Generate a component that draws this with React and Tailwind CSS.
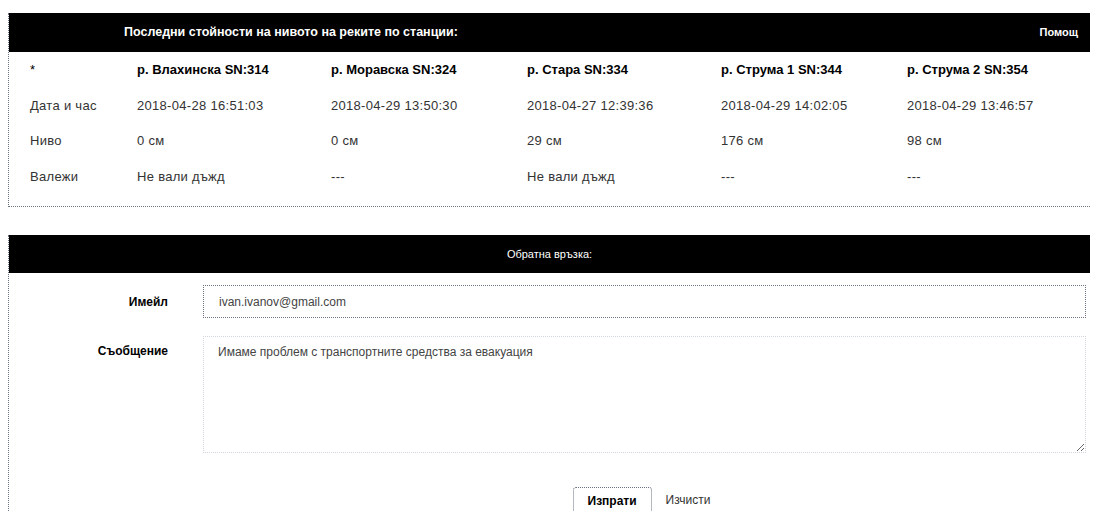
const stations = [
  { name: "р. Влахинска SN:314", time: "2018-04-28 16:51:03", level: "0 см", rain: "Не вали дъжд" },
  { name: "р. Моравска SN:324", time: "2018-04-29 13:50:30", level: "0 см", rain: "---" },
  { name: "р. Стара SN:334", time: "2018-04-27 12:39:36", level: "29 см", rain: "Не вали дъжд" },
  { name: "р. Струма 1 SN:344", time: "2018-04-29 14:02:05", level: "176 см", rain: "---" },
  { name: "р. Струма 2 SN:354", time: "2018-04-29 13:46:57", level: "98 см", rain: "---" },
];

const rows = [
  { label: "Дата и час", key: "time" },
  { label: "Ниво", key: "level" },
  { label: "Валежи", key: "rain" },
];

const cols = "grid grid-cols-[107px_194px_196px_194px_186px_1fr] items-center h-[35.5px]";

function Levels() {
  return (
    <section className="border-l border-b border-dotted border-gray-500 pb-[12px]">
      <div className="flex items-center h-[39px] bg-black text-white pl-[115px] pr-[12px]">
        <span className="flex-1 text-[12.5px] font-bold">Последни стойности на нивото на реките по станции:</span>
        <span className="text-[11px] font-bold">Помощ</span>
      </div>
      <div className="pl-[21px] text-[13px] tracking-[0.3px] text-[#333]">
        <div className={cols + " text-black"}>
          <span>*</span>
          {stations.map((s) => (
            <span key={s.name} className="font-bold tracking-normal">{s.name}</span>
          ))}
        </div>
        {rows.map((r) => (
          <div key={r.key} className={cols}>
            <span>{r.label}</span>
            {stations.map((s) => (
              <span key={s.name}>{s[r.key]}</span>
            ))}
          </div>
        ))}
      </div>
    </section>
  );
}

function Feedback() {
  return (
    <section className="border-l border-dotted border-gray-500 mt-[28px]">
      <div className="flex items-center justify-center h-[38px] bg-black text-white text-[11px]">
        Обратна връзка:
      </div>
      <div className="grid grid-cols-[159px_1fr] gap-x-[35px] pr-[4px] pt-[12px] text-[12px]">
        <label className="text-right font-bold text-black self-center">Имейл</label>
        <input
          defaultValue="ivan.ivanov@gmail.com"
          className="h-[33px] border border-dotted border-gray-500 px-[15px] text-[12px] text-[#444] outline-none"
        />
        <label className="text-right font-bold text-black pt-[6px] mt-[18px]">Съобщение</label>
        <textarea
          defaultValue="Имаме проблем с транспортните средства за евакуация"
          className="mt-[18px] h-[117px] border border-dotted border-gray-300 px-[14px] pt-[6px] text-[12px] text-[#444] outline-none resize-y"
        />
        <div />
        <div className="flex justify-center gap-[8px] mt-[34px]">
          <button className="h-[26px] px-[14px] border border-dotted border-gray-500 border-b-0 rounded-t-[3px] font-bold text-[12px] text-black">
            Изпрати
          </button>
          <button className="h-[26px] px-[6px] text-[12px] text-[#333]">Изчисти</button>
        </div>
      </div>
    </section>
  );
}

export default function App() {
  return (
    <div className="min-h-screen bg-white pl-[8px] pr-[5px] pt-[13px] font-['Liberation_Sans',Arial,sans-serif]">
      <Levels />
      <Feedback />
    </div>
  );
}
